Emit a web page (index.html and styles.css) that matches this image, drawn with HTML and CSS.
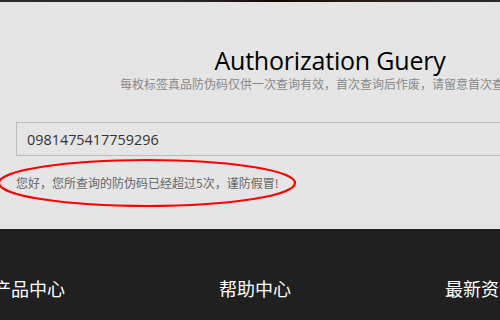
FILE: index.html
```html
<!DOCTYPE html>
<html>
<head>
    <meta charset="utf-8">
    <title>Authorization Guery</title>
    <link rel="stylesheet" href="styles.css">
</head>
<body>
<div class="topbar"></div>
<div class="query">
    <div class="head">
        <h2>Authorization Guery</h2>
        <p>每枚标签真品防伪码仅供一次查询有效，首次查询后作废，请留意首次查询时间</p>
    </div>
    <div class="form">
        <input type="text" class="code" value="0981475417759296">
        <div class="result">
            <span>您好，您所查询的防伪码已经超过5次，谨防假冒!</span>
            <svg class="mark" width="300" height="50" viewBox="0 0 300 50">
                <ellipse cx="148" cy="25" rx="148" ry="23" fill="none" stroke="#f00" stroke-width="2.2"/>
            </svg>
        </div>
    </div>
</div>
<div class="foot">
    <ul class="nav">
        <li>产品中心</li>
        <li>帮助中心</li>
        <li>最新资讯</li>
    </ul>
</div>
</body>
</html>
```

FILE: styles.css
```css
@charset "utf-8";
html,body,h2,p,ul,li,div,input{padding:0; margin:0; border:0;}
ul{list-style:none;}
html,body{width:100%;height:100%;overflow:hidden;}
body{
    background-color:#e5e5e5;
    font-family:"Noto Sans","Noto Sans CJK SC",sans-serif;
}

.topbar{
    height:2px;
    background:linear-gradient(90deg,#2c2c2c 0%,#2a2421 40%,#120804 55%,#2a1f1a 75%,#2b2b2b 100%);
}

/*query*/
.query{
    width:660px;
    height:227px;
}
.query .head{
    padding-top:41px;
    text-align:center;
}
.query h2{
    font-family:"Open Sans","Noto Sans",sans-serif;
    font-weight:normal;
    font-size:25px;
    letter-spacing:-0.2px;
    line-height:34px;
    color:#000;
}
.query .head p{
    margin-top:-1px;
    font-size:12px;
    line-height:16px;
    color:#888;
    white-space:nowrap;
    font-family:"Noto Sans CJK SC",sans-serif;
}
.query .form{
    padding:30px 0 0 16px;
}
.query .code{
    display:block;
    width:620px;
    height:34px;
    box-sizing:border-box;
    border:1px solid #bbb;
    background-color:#e5e5e5;
    padding-left:10px;
    font-family:"Open Sans",sans-serif;
    font-size:14.4px;
    color:#333;
}
.query .result{
    position:relative;
    margin-top:19px;
    font-family:"Noto Sans CJK SC",sans-serif;
    font-size:12px;
    line-height:16px;
    color:#666;
}
.query .result .mark{
    position:absolute;
    left:-17px;
    top:-17px;
}

/*foot*/
.foot{
    background-color:#202020;
    height:91px;
}
.foot .nav{
    display:flex;
    gap:154px;
    margin-left:-7px;
    padding-top:47px;
}
.foot .nav li{
    font-family:"Noto Sans CJK SC",sans-serif;
    font-size:18px;
    line-height:24px;
    color:#fff;
    white-space:nowrap;
}
```
